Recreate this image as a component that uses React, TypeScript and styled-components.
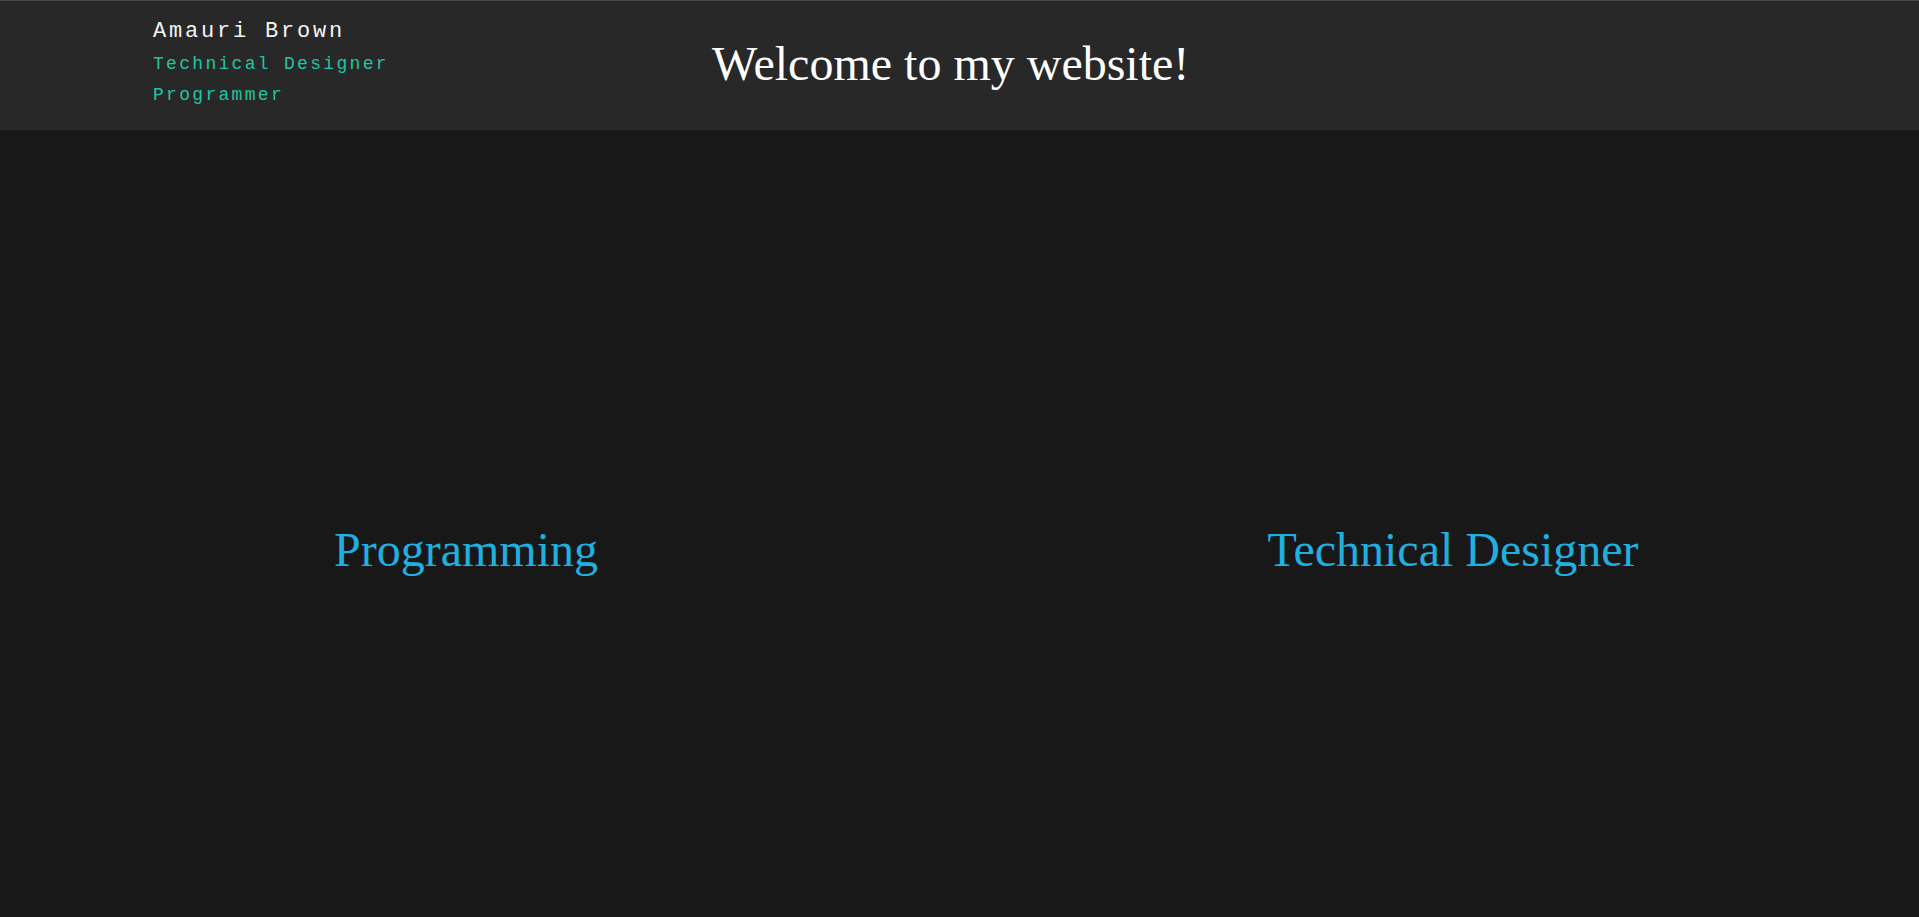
import React from "react";
import styled, { createGlobalStyle } from "styled-components";

const Global = createGlobalStyle`
  html, body {
    margin: 0;
    padding: 0;
    background: #181818;
  }
  body {
    font-family: "Liberation Serif", "Times New Roman", serif;
    overflow: hidden;
  }
`;

const Page = styled.div`
  min-height: 100vh;
  background: #181818;
  display: flex;
  flex-direction: column;
`;

const Header = styled.header`
  box-sizing: border-box;
  height: 130px;
  background: #282828;
  border-top: 1px solid #4a4a4a;
  padding: 14px 0 0 153px;
  display: flex;
  align-items: flex-start;
`;

const Brand = styled.div`
  width: 234px;
  flex: none;
  white-space: nowrap;
  font-family: "Liberation Mono", "Courier New", monospace;
`;

const Name = styled.div`
  font-size: 22px;
  line-height: 34px;
  letter-spacing: 2.8px;
  color: #f4f4f4;
`;

const Role = styled.div`
  font-size: 18px;
  line-height: 31px;
  letter-spacing: 2.3px;
  color: #22c4a2;
`;

const Title = styled.h1`
  margin: 21px 0 0 325px;
  font-weight: normal;
  font-size: 48px;
  color: #ffffff;
  white-space: nowrap;
`;

const Main = styled.main`
  flex: 1;
  display: grid;
  grid-template-columns: 1fr 1fr;
  column-gap: 55px;
  padding-top: 392px;
  align-items: start;
`;

const Section = styled.a`
  justify-self: center;
  font-size: 48px;
  color: #1fb0e0;
  text-decoration: none;
  cursor: pointer;
`;

export default function App() {
  return (
    <>
      <Global />
      <Page>
        <Header>
          <Brand>
            <Name>Amauri Brown</Name>
            <Role>Technical Designer</Role>
            <Role>Programmer</Role>
          </Brand>
          <Title>Welcome to my website!</Title>
        </Header>
        <Main>
          <Section>Programming</Section>
          <Section>Technical Designer</Section>
        </Main>
      </Page>
    </>
  );
}
